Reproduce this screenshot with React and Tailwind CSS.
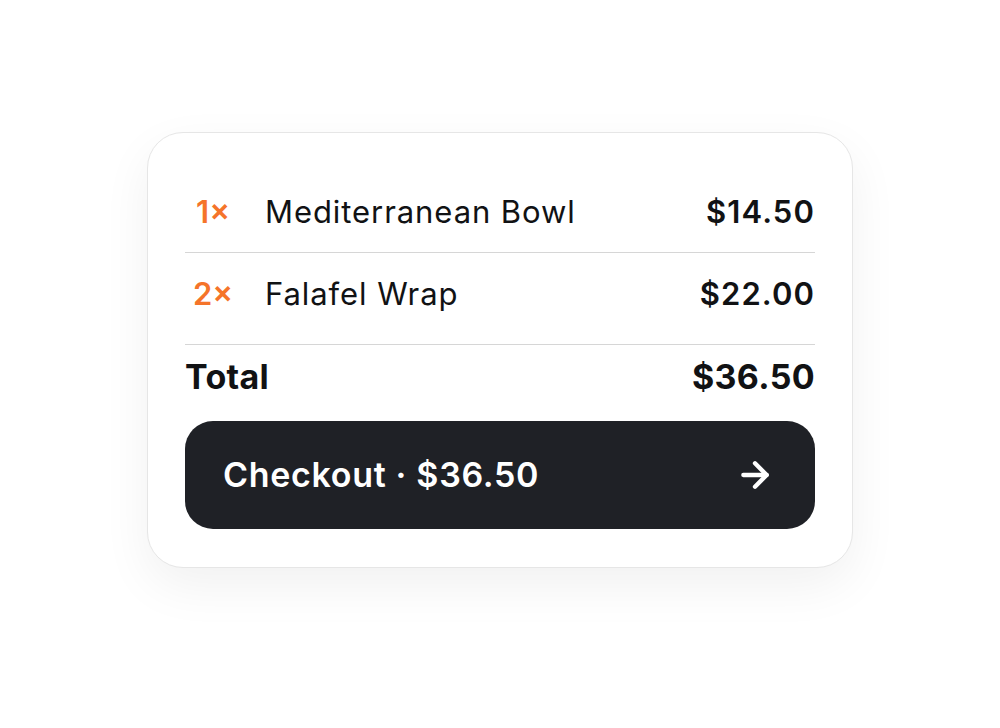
import { ArrowRight } from 'lucide-react'

const items = [
  { qty: 1, name: 'Mediterranean Bowl', price: '$14.50' },
  { qty: 2, name: 'Falafel Wrap', price: '$22.00' },
]

function OrderLine({ qty, name, price, className = '' }) {
  return (
    <div className={`flex items-center text-[31px] leading-none tracking-[0.03em] text-[#111214] ${className}`}>
      <span className="w-[56px] text-center font-semibold tracking-normal text-[#f5742a]">{qty}×</span>
      <span className="ml-[24px] flex-1">{name}</span>
      <span className="font-semibold tracking-[0.035em]">{price}</span>
    </div>
  )
}

export default function App() {
  return (
    <div
      className="flex h-[728px] w-full items-start justify-center bg-white pt-[132px]"
      style={{ fontFamily: 'Inter, "Noto Sans", sans-serif' }}
    >
      <div className="flex w-[706px] flex-col rounded-[36px] border border-[#e6e6e6] bg-white px-[37px] pt-[37px] pb-[38px] shadow-[0_18px_50px_rgba(0,0,0,0.06)]">
        <OrderLine {...items[0]} className="h-[82px]" />
        <div className="h-px bg-[#d6d6d6]" />
        <OrderLine {...items[1]} className="h-[80px]" />
        <div className="mt-[11px] h-px bg-[#d6d6d6]" />

        <div className="flex h-[63px] items-center justify-between text-[34px] leading-none font-bold tracking-[0.01em] text-[#111214]">
          <span>Total</span>
          <span>$36.50</span>
        </div>

        <button
          type="button"
          className="mt-[13px] flex h-[108px] items-center justify-between rounded-[28px] bg-[#1f2126] pr-[40px] pl-[38px] text-[34px] leading-none font-semibold tracking-[0.02em] text-white"
        >
          <span>Checkout · $36.50</span>
          <ArrowRight size={40} strokeWidth={2.6} />
        </button>
      </div>
    </div>
  )
}
